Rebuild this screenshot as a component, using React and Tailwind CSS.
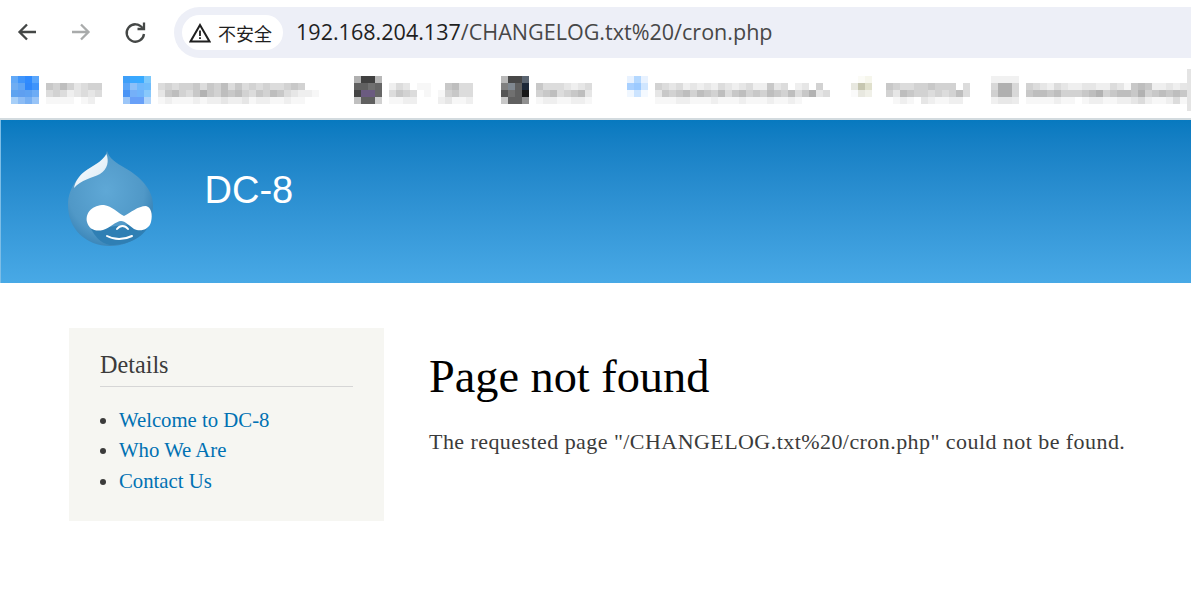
import React from 'react';

const SHADES = {
  '.': '#ffffff', a: '#f7f7f7', b: '#efefef', c: '#e6e6e6', d: '#dcdcdc',
  e: '#d2d2d2', f: '#c8c8c8', g: '#bebebe', h: '#b2b2b2',
};

// blurred bookmark bar, every block is 7px in the screenshot
const BOOKMARKS = [
  {
    ml: 'ml-[11px]', icon: [
      ['#62a9f7', '#3f95fb', '#2f8bff', '#5aa6fb'],
      ['#6fadf2', '#5fa5f5', '#2f88fb', '#3f94fb'],
      ['#5ea3f0', '#5f9ff0', '#5fa2f2', '#6dacf5'],
      ['#a7cff8', '#8cbcf5', '#78b0f3', '#98c4f7'],
    ],
    text: ['fegecdee', 'dedbcdcd', 'aaaa.ab.'],
  },
  {
    ml: 'ml-[21px]', icon: [
      ['#3e9ff8', '#3aa8ff', '#38aaff', '#7cc8fb'],
      ['#5aa5f8', '#8cc0f8', '#70b8fb', '#70bcfb'],
      ['#4a94f5', '#75b0f8', '#70b4fb', '#88c8fb'],
      ['#9cc6f8', '#68a0f8', '#68a0f8', '#b0d4fa'],
    ],
    text: ['dedeefdfegdfdededdefe..', 'cfgedfhfegfgedfegfdcbba', 'abaaababbcbbcabbaabaa..'],
  },
  {
    ml: 'ml-[35px]', icon: [
      ['#b0b0b0', '#404040', '#404040', '#b8b8b8'],
      ['#606060', '#606060', '#707070', '#666666'],
      ['#444444', '#6b5b80', '#6b5b80', '#666666'],
      ['#c0c0c0', '#606060', '#606060', '#d0d0d0'],
    ],
    text: ['bdc.aa..fgdd', 'dfed.a.aefdd', 'aabb...bcaab'],
  },
  {
    ml: 'ml-[28px]', icon: [
      ['#b8b8b8', '#484848', '#484848', '#5a6470'],
      ['#808080', '#808890', '#606060', '#1c2838'],
      ['#555555', '#707070', '#606060', '#181818'],
      ['#c8c8c8', '#606060', '#606060', '#909090'],
    ],
    text: ['fdddcbcd.', 'efgdefgc.', 'abbaabba.'],
  },
  {
    ml: 'ml-[28px]', icon: [
      ['#e8f2ff', '#b4d8ff', '#e8f2ff'],
      ['#a8d0ff', '#9ccaff', '#d0e6ff'],
      ['#f0f7ff', '#cce4ff', '#f4f9ff'],
    ],
    text: ['edcdbcbcbdcbcdbbfcd.bc.e.', 'cfefgegfegdfgefegfegdfhcd', 'aaabbaaabaaabaaabaaba....'],
  },
  {
    ml: 'ml-[21px]', icon: [
      ['#ffffff', '#fbfbf6', '#f6f6ec', '#ffffff'],
      ['#e8e8e0', '#c6c6b0', '#e0e0cc', '#ffffff'],
      ['#fafafa', '#e8e8e0', '#f0f0e8', '#ffffff'],
    ],
    text: ['feddeefeee.d', 'ecgfeededegd', '.aba.cbaabb.'],
  },
  {
    ml: 'ml-[21px]', icon: [
      ['#f1f1f1', '#f1f1f1', '#f1f1f1', '#f1f1f1'],
      ['#d8d8d8', '#b0b0b0', '#b0b0b0', '#d8d8d8'],
      ['#d0d0d0', '#b0b0b0', '#b0b0b0', '#d8d8d8'],
      ['#f0f0f0', '#e8e8e8', '#e8e8e8', '#ececec'],
    ],
    text: ['edcbdcbbccbbdcafgfbbcbc', 'fggfgeeefghefggfhefgfgf', 'aaaabaa.abbaabbcdbaabda'],
  },
];

const Mosaic = ({ item }) => {
  const textCols = Math.max(...item.text.map((r) => r.length));
  const iconCols = item.icon[0].length;
  const textX = iconCols * 7 + 7;
  return (
    <svg width={textX + textCols * 7} height={28} className={`${item.ml} shrink-0`} shapeRendering="crispEdges">
      {item.icon.map((row, y) =>
        row.map((c, x) => <rect key={`i${x}-${y}`} x={x * 7} y={y * 7} width={7} height={7} fill={c} />)
      )}
      {item.text.map((row, y) =>
        row.split('').map((c, x) => (
          <rect key={`t${x}-${y}`} x={textX + x * 7} y={7 + y * 7} width={7} height={7} fill={SHADES[c]} />
        ))
      )}
    </svg>
  );
};

const DrupalDrop = () => (
  <svg width={100} height={105} viewBox="60 145 100 105" className="shrink-0">
    <defs>
      <radialGradient id="drop" cx="0.45" cy="0.42" r="0.62">
        <stop offset="0" stopColor="#5fa8d6" />
        <stop offset="0.72" stopColor="#5098c7" />
        <stop offset="1" stopColor="#3581b5" />
      </radialGradient>
      <linearGradient id="shine" x1="0" y1="0" x2="1" y2="1">
        <stop offset="0" stopColor="#ffffff" />
        <stop offset="0.65" stopColor="#e4f0f8" />
        <stop offset="1" stopColor="#9fcbe6" />
      </linearGradient>
    </defs>
    <path
      d="M107 151 C109 158 116 163 125 168 C141 177 153 190 153 205 C153 229 134 246 110 246 C86 246 68 229 68 205 C68 186 81 173 93 166 C100 162 105 158 107 151 Z"
      fill="url(#drop)"
    />
    <path d="M106.500 154 C102 162 92 166 84 172 C79 176 75 182 74 188 C81 180 92 178 100 174 C108 169 109 161 106.500 154 Z" fill="url(#shine)" />
    <path d="M91 229 L150 222 C146 236 130 245 110 245 C100 243 95 236 91 229 Z" fill="#2f7fb4" />
    <path
      d="M87 222 C85 212 93 205 104 205 C112 206 118 213 124 216 C130 213 138 206 146 206 C151 207 153 214 151 222 C149 230 140 232 134 229 C130 226 125 221 121 221 C116 221 110 228 103 230 C95 232 89 229 87 222 Z"
      fill="#ffffff"
    />
    <path d="M117 229 C120 225 125 225 128 229" fill="none" stroke="#ffffff" strokeWidth="2" strokeLinecap="round" />
    <path d="M107 236 C114 240 124 240 132 236" fill="none" stroke="#ffffff" strokeWidth="2" strokeLinecap="round" />
  </svg>
);

export default function App() {
  return (
    <div className="min-h-[594px] bg-white overflow-hidden">
      {/* browser chrome */}
      <div className="h-[118px] flex flex-col">
        <div className="h-[65px] pt-[7px] flex items-start">
          <svg width={174} height={51} className="shrink-0" fill="none" strokeWidth="2.3">
            <path d="M36 25 H20 M27 17.5 L19.5 25 L27 32.5" stroke="#444746" />
            <path d="M72 25 H88 M81 17.5 L88.5 25 L81 32.5" stroke="#a9abab" />
            <path d="M142.500 21 A8.700 8.700 0 1 0 144 27" stroke="#444746" />
            <path d="M144 15.500 V22 H137.500" stroke="#444746" />
          </svg>
          <div className="flex-1 h-[51px] bg-[#edeff7] rounded-l-[26px] flex items-center pl-2">
            <div className="w-[101px] h-[35px] bg-white rounded-full flex items-center pl-[7px] shrink-0">
              <svg width={22} height={20} fill="none" stroke="#1f1f1f" strokeWidth="2">
                <path d="M11 2 L20.500 18.500 H1.500 Z" strokeLinejoin="miter" />
                <path d="M11 7.500 V13 M11 14.200 V16" strokeWidth="1.800" />
              </svg>
              <span className="ml-[7px] text-[18px] text-[#1f1f1f] font-['Noto_Sans_CJK_SC',sans-serif] leading-none">不安全</span>
            </div>
            <div className="ml-[13px] text-[21.55px] text-[#1f1f1f] font-['Open_Sans',sans-serif] whitespace-nowrap">
              192.168.204.137<span className="text-[#474747]">/CHANGELOG.txt%20/cron.php</span>
            </div>
          </div>
        </div>
        <div className="h-[53px] pt-[11px] flex items-start relative">
          {BOOKMARKS.map((b, i) => <Mosaic key={i} item={b} />)}
          <div className="absolute right-0 top-[4px] w-1 h-[42px] bg-[#e4e4e4]" />
        </div>
      </div>
      <div className="h-[2px] bg-[#d3dbdf]" />

      {/* site header */}
      <header className="h-[163px] border-l border-[#7dbde6] bg-gradient-to-b from-[#0779bf] to-[#48a9e6] flex items-start pl-[59px] pt-[25px]">
        <DrupalDrop />
        <div className="ml-[44.5px] mt-[20px] text-[38px] leading-[50px] text-white font-['Liberation_Sans',sans-serif]">DC-8</div>
      </header>

      {/* page body */}
      <div className="flex items-start pt-[45px] pl-[69px] font-['Liberation_Serif',serif] text-[#3b3b3b]">
        <aside className="w-[315px] h-[193px] bg-[#f6f6f2] pt-[22px] pl-[31px] pr-[31px] shrink-0">
          <h2 className="text-[24.2px] leading-[30px] pb-[6px] border-b border-[#d6d6d6]">Details</h2>
          <ul className="mt-[17.5px] list-disc pl-[19px] text-[20.75px] leading-[30.5px] text-[#0071b3]">
            <li className="marker:text-[#3b3b3b]">Welcome to DC-8</li>
            <li className="marker:text-[#3b3b3b]">Who We Are</li>
            <li className="marker:text-[#3b3b3b]">Contact Us</li>
          </ul>
        </aside>
        <main className="ml-[45px] pt-[23px]">
          <h1 className="text-[46.3px] leading-[52px] text-black">Page not found</h1>
          <p className="mt-[24px] text-[22px] tracking-[0.44px] leading-[30px] whitespace-nowrap">
            The requested page "/CHANGELOG.txt%20/cron.php" could not be found.
          </p>
        </main>
      </div>
    </div>
  );
}
